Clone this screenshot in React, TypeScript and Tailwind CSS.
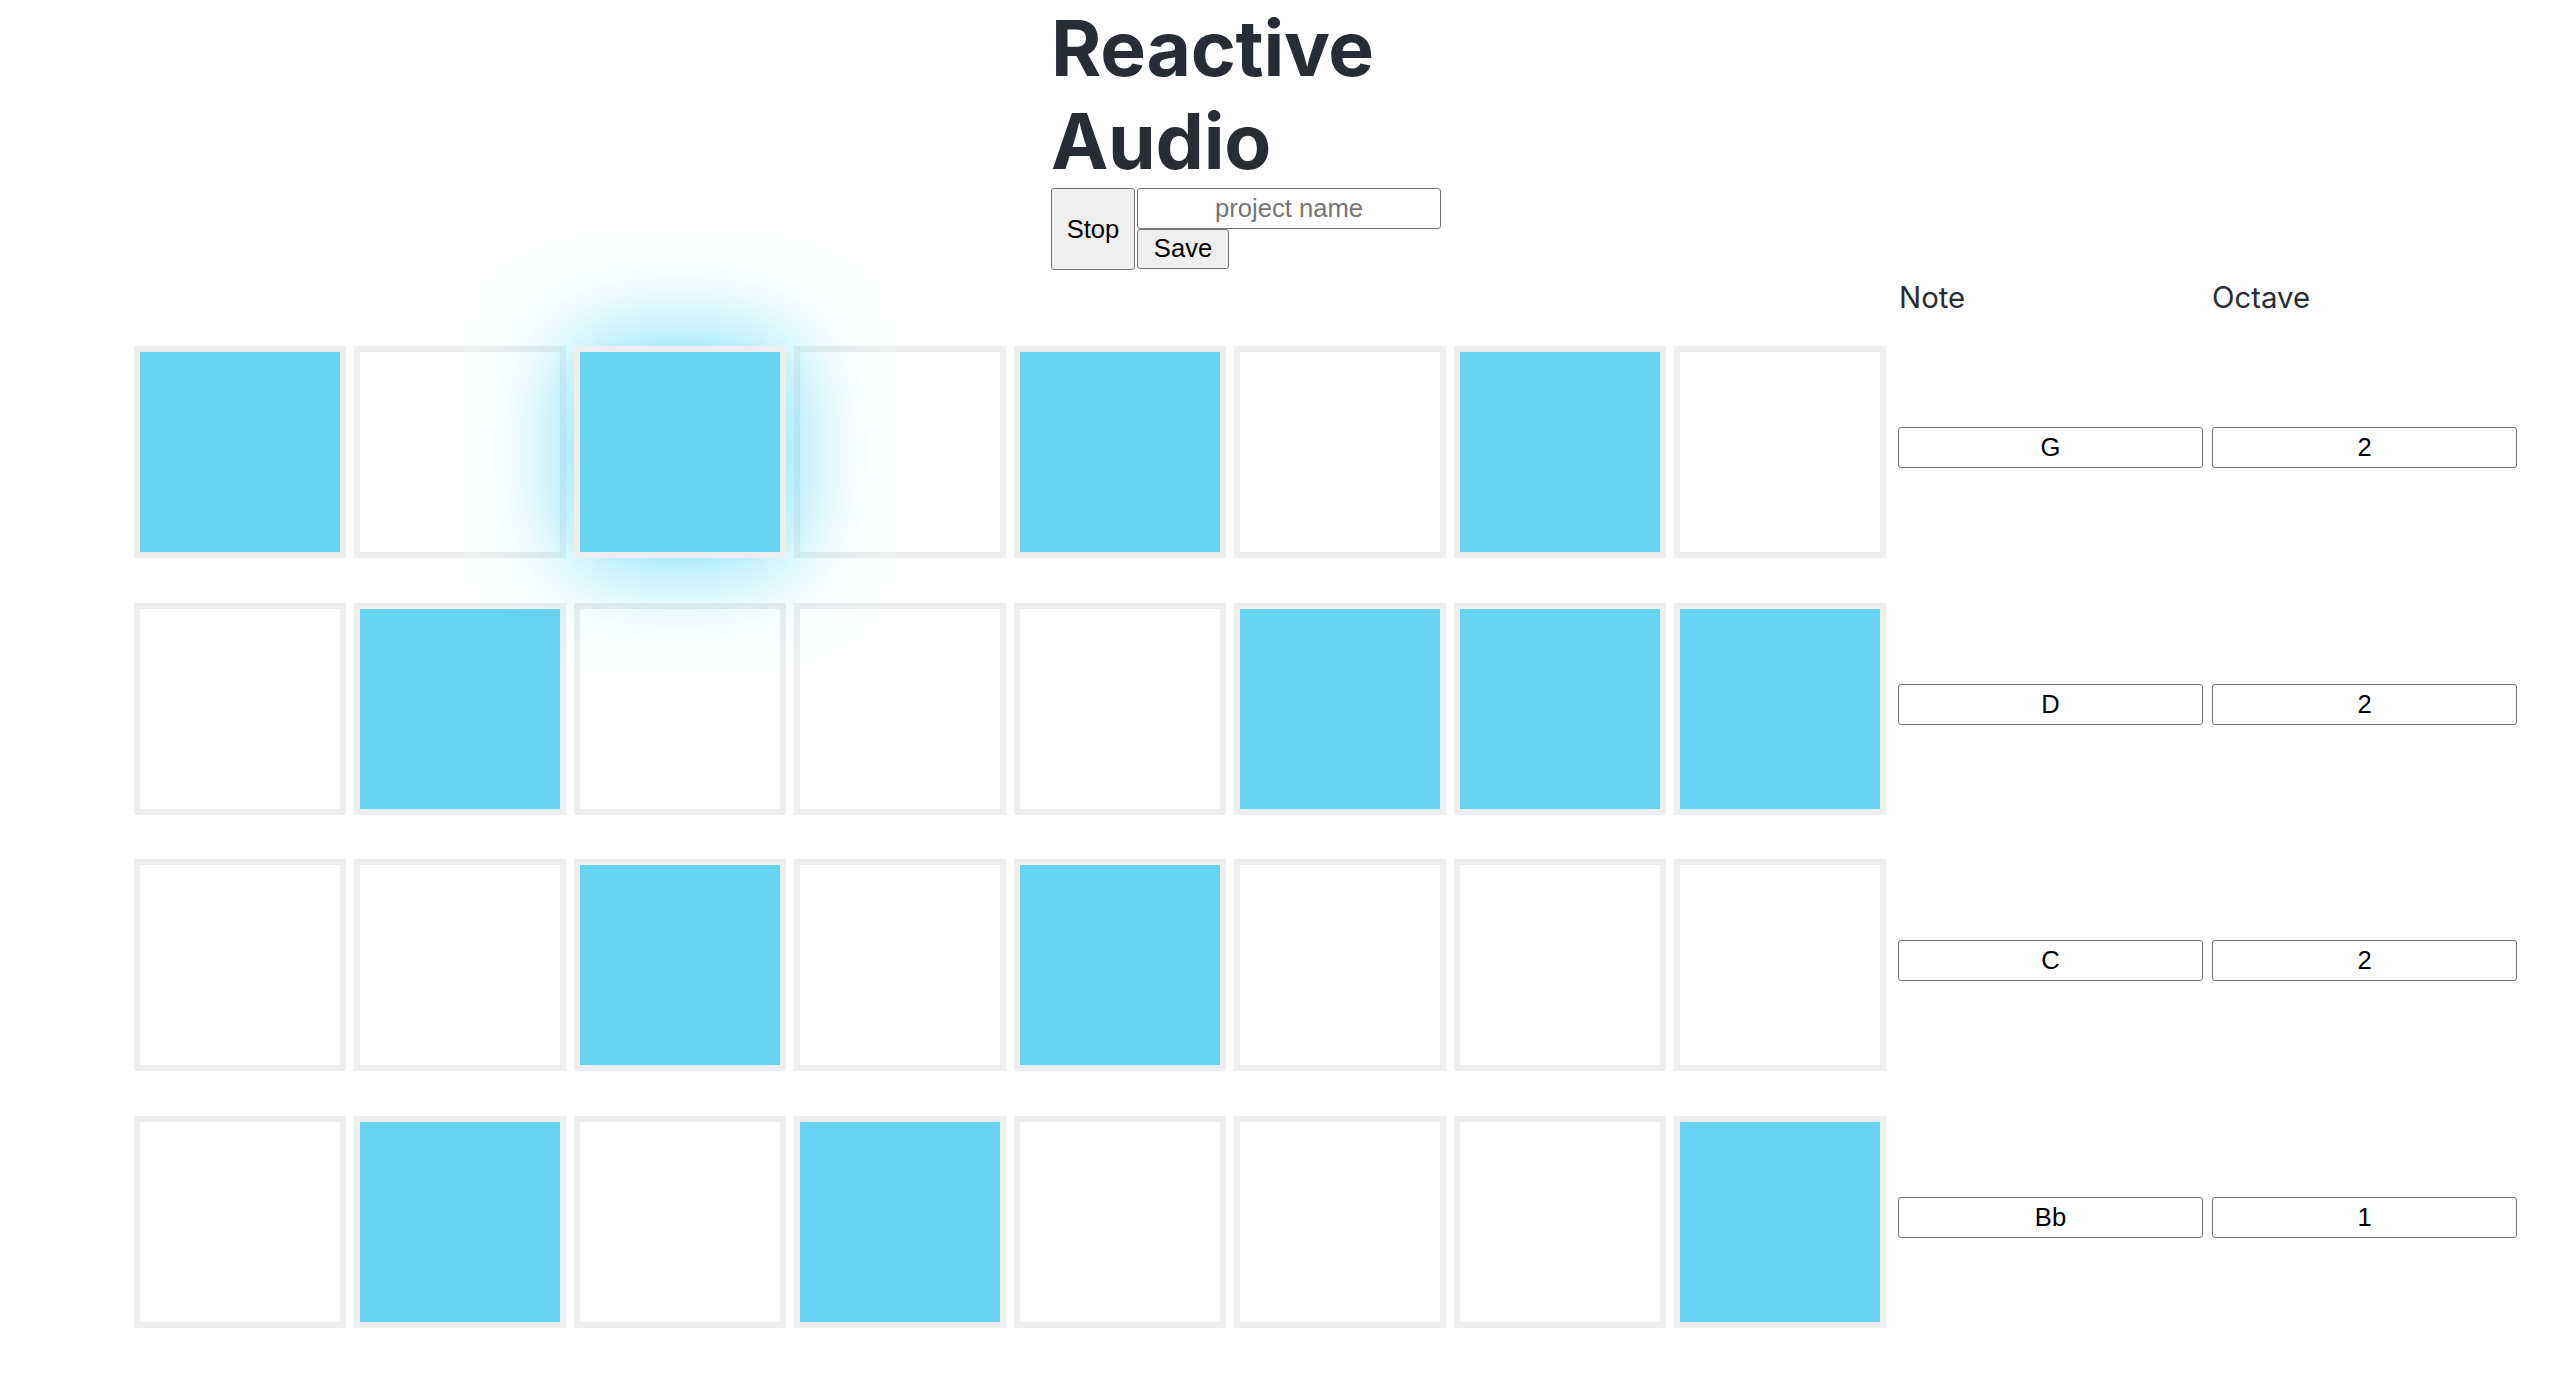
import React from "react";

const grid = [
  [1, 0, 1, 0, 1, 0, 1, 0],
  [0, 1, 0, 0, 0, 1, 1, 1],
  [0, 0, 1, 0, 1, 0, 0, 0],
  [0, 1, 0, 1, 0, 0, 0, 1],
];

const tracks = [
  { note: "G", octave: "2" },
  { note: "D", octave: "2" },
  { note: "C", octave: "2" },
  { note: "Bb", octave: "1" },
];

// column currently playing
const playing = { row: 0, col: 2 };

function Cell({ on, glow }: { on: boolean; glow: boolean }) {
  return (
    <div
      className={
        "w-[212px] h-[212px] shrink-0 border-[6px] border-[#eeeeee] " +
        (on ? "bg-[#66d4f0] " : "bg-white ") +
        (glow ? "relative z-10 shadow-[0_0_100px_0_#61dafb]" : "")
      }
    />
  );
}

export default function App() {
  return (
    <div className="min-h-screen bg-white text-[#282c34] font-['Inter',sans-serif]">
      <div className="pl-[1051px] pt-[3px]">
        <h1 className="text-[76.8px] leading-[92.5px] font-bold tracking-[-0.3px] w-[390px]">Reactive Audio</h1>
        <div className="flex items-start font-['Liberation_Sans',Arial,sans-serif] text-[25.6px] text-black">
          <button className="w-[84px] h-[82px] bg-[#efefef] border-[1.6px] border-[#767676] rounded-[3px]">
            Stop
          </button>
          <div className="flex flex-col items-start ml-[2px]">
            <input
              placeholder="project name"
              className="w-[304px] h-[41px] border-[1.6px] border-[#767676] rounded-[3px] text-center placeholder:text-[#757575]"
            />
            <button className="w-[92px] h-[40px] bg-[#efefef] border-[1.6px] border-[#767676] rounded-[3px] leading-none">
              Save
            </button>
          </div>
        </div>
      </div>

      <div className="pl-[134px]">
        <div className="flex mt-[10px] text-[29.4px] leading-[35px]">
          <div className="w-[1752px] shrink-0" />
          <div className="ml-[13px] w-[313px] shrink-0">Note</div>
          <div>Octave</div>
        </div>

        <div className="flex flex-col gap-y-[44.67px] mt-[31px] pb-[48px]">
          {grid.map((row, r) => (
            <div key={r} className="flex items-start">
              <div className="flex gap-[8px]">
                {row.map((v, c) => (
                  <Cell key={c} on={v === 1} glow={r === playing.row && c === playing.col} />
                ))}
              </div>
              <div className="flex gap-[9px] ml-[12px] mt-[81px] font-['Liberation_Sans',Arial,sans-serif] text-[25.6px] text-black">
                <input
                  defaultValue={tracks[r].note}
                  className="w-[305px] h-[41px] border-[1.6px] border-[#767676] rounded-[3px] text-center"
                />
                <input
                  defaultValue={tracks[r].octave}
                  className="w-[305px] h-[41px] border-[1.6px] border-[#767676] rounded-[3px] text-center"
                />
              </div>
            </div>
          ))}
        </div>
      </div>
    </div>
  );
}
